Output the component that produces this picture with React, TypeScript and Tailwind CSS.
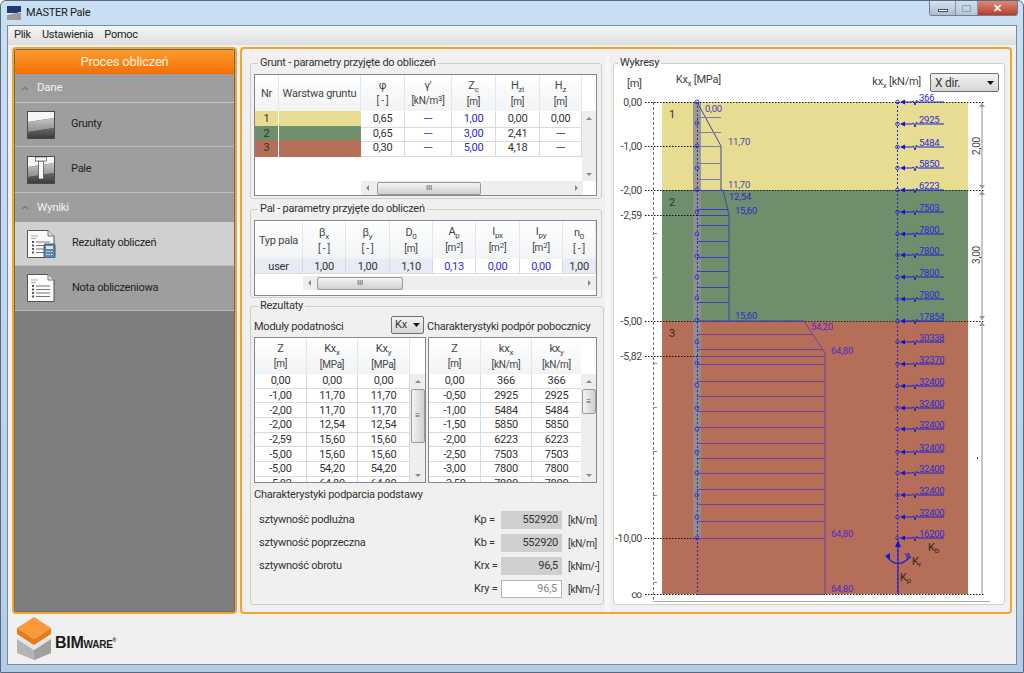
import React from 'react';

const font = { fontFamily: 'Roboto, "Liberation Sans", sans-serif' };

const soilRows = [
  { nr: '1', color: 'bg-[#e6dc92]', phi: '0,65', zc: '1,00', hzi: '0,00', hz: '0,00' },
  { nr: '2', color: 'bg-[#6f8e6b]', phi: '0,65', zc: '3,00', hzi: '2,41', hz: '---' },
  { nr: '3', color: 'bg-[#b56f58]', phi: '0,30', zc: '5,00', hzi: '4,18', hz: '---' }
];
const modRows = [
  ['0,00', '0,00', '0,00'], ['-1,00', '11,70', '11,70'], ['-2,00', '11,70', '11,70'], ['-2,00', '12,54', '12,54'],
  ['-2,59', '15,60', '15,60'], ['-5,00', '15,60', '15,60'], ['-5,00', '54,20', '54,20'], ['-5,82', '64,80', '64,80']
];
const supRows = [
  ['0,00', '366', '366'], ['-0,50', '2925', '2925'], ['-1,00', '5484', '5484'], ['-1,50', '5850', '5850'],
  ['-2,00', '6223', '6223'], ['-2,50', '7503', '7503'], ['-3,00', '7800', '7800'], ['-3,50', '7800', '7800']
];
const springs = [
  [102, '366'], [124, '2925'], [147, '5484'], [168, '5850'], [190, '6223'], [212, '7503'], [234, '7800'],
  [255, '7800'], [277, '7800'], [299, '7800'], [321, '17854'], [342, '30338'], [364, '32370'], [386, '32400'],
  [408, '32400'], [429, '32400'], [452, '32400'], [473, '32400'], [495, '32400'], [517, '32400'], [538, '16200']
] as [number, string][];
const pileNodes = [102, 123, 146, 168, 190, 212, 234, 256, 277, 298, 320, 342, 363, 385, 408, 429, 452, 473, 495, 517, 538];
const levels = [
  [102, '0,00'], [146, '-1,00'], [190, '-2,00'], [215, '-2,59'], [321, '-5,00'], [356, '-5,82'], [538, '-10,00'], [594, '∞']
] as [number, string][];
const hatchA = [117, 132, 146, 163, 179];
const hatchB = [190, 209, 215, 225, 241, 257, 271, 287, 302];
const hatchC = [334, 349];
const hatchD = [356, 364, 381, 396, 411, 427, 443, 458, 473, 489, 504, 521, 538, 594];
const axisTicks = [233, 277, 363, 407, 451, 495, 582];

const Group = ({ title, className, children }: { title: string; className: string; children: React.ReactNode }) => (
  <fieldset className={`border border-[#d0d0bf] rounded-[3px] ${className}`}>
    <legend className="ml-[4px] px-[2px] h-[14px] leading-[14px] text-[11px] text-[#333]">{title}</legend>
    {children}
  </fieldset>
);

const Head = ({ top, sub, unit, sup }: { top: string; sub?: string; unit?: string; sup?: string }) => (
  <div className="h-full flex flex-col items-center justify-center border-r border-[#e4e7ea] bg-gradient-to-b from-white to-[#f1f3f5] text-[#444] leading-[15px]">
    <div className="text-[11px]">
      {top}
      {sub && <span className="text-[8px] relative top-[3px]">{sub}</span>}
    </div>
    {unit && (
      <div className="text-[10px]">
        {unit}
        {sup && <span className="text-[8px] relative top-[-3px]">{sup}</span>}
        {sup && ']'}
      </div>
    )}
  </div>
);

const Val = ({ children, blue, className = '' }: { children?: React.ReactNode; blue?: boolean; className?: string }) => (
  <div className={`flex items-center justify-center border-r border-b border-[#d8dadc] text-[11px] leading-none ${blue ? 'text-[#2a2ad8]' : 'text-[#333]'} ${className}`}>
    {children}
  </div>
);

const Tri = ({ dir }: { dir: 'l' | 'r' | 'u' | 'd' }) => {
  const pts = { l: '5,1 5,7 2,4', r: '3,1 3,7 6,4', u: '1,5 7,5 4,2', d: '1,3 7,3 4,6' }[dir];
  return (
    <svg width="8" height="8" viewBox="0 0 8 8" className="shrink-0">
      <polygon points={pts} fill="#8a8a8a" />
    </svg>
  );
};

const HScroll = ({ offset, thumb, className }: { offset: string; thumb: string; className: string }) => (
  <div className={`flex items-center bg-[#eeeeee] h-[14px] ${className}`}>
    <div className="w-[14px] flex justify-center"><Tri dir="l" /></div>
    <div className={`${offset}`} />
    <div className={`${thumb} h-[13px] rounded-[2px] border border-[#9a9a9a] bg-gradient-to-b from-[#f4f4f4] to-[#cfcfcf] flex items-center justify-center text-[8px] leading-none text-[#555]`}>
      III
    </div>
    <div className="flex-1" />
    <div className="w-[14px] flex justify-center"><Tri dir="r" /></div>
  </div>
);

const VScroll = ({ thumb, className }: { thumb?: string; className: string }) => (
  <div className={`w-[15px] flex flex-col items-center bg-[#eeeeee] ${className}`}>
    <div className="h-[15px] flex items-center"><Tri dir="u" /></div>
    {thumb && (
      <div className={`${thumb} w-[14px] rounded-[2px] border border-[#9a9a9a] bg-gradient-to-r from-[#f4f4f4] to-[#cfcfcf] flex items-center justify-center text-[8px] leading-none text-[#555]`}>
        ≡
      </div>
    )}
    <div className="flex-1" />
    <div className="h-[15px] flex items-center"><Tri dir="d" /></div>
  </div>
);

const Combo = ({ label, className }: { label: string; className: string }) => (
  <div className={`flex items-center justify-between border border-[#707070] rounded-[2px] bg-gradient-to-b from-[#f2f2f2] to-[#d6d6d6] text-[#333] ${className}`}>
    <span>{label}</span>
    <svg width="7" height="4" viewBox="0 0 7 4"><polygon points="0,0 7,0 3.5,4" fill="#111" /></svg>
  </div>
);

const GruntTable = () => (
  <div className="h-[122px] border border-[#828790] bg-white flex flex-col">
    <div className="flex-1 flex">
      <div className="w-[327px]">
        <div className="grid grid-cols-[24px_82px_44px_47px_44px_44px_42px] h-[36px]">
          <Head top="Nr" />
          <Head top="Warstwa gruntu" />
          <Head top="φ" unit="[ - ]" />
          <Head top="γ'" unit="[kN/m" sup="3" />
          <Head top="Z" sub="c" unit="[m]" />
          <Head top="H" sub="zi" unit="[m]" />
          <Head top="H" sub="z" unit="[m]" />
        </div>
        {soilRows.map(r => (
          <div key={r.nr} className="grid grid-cols-[24px_82px_44px_47px_44px_44px_42px] h-[14.5px]">
            <div className={`${r.color} flex items-center justify-center text-[11px] text-[#333] border-r border-white`}>{r.nr}</div>
            <div className={r.color} />
            <Val>{r.phi}</Val>
            <Val blue>---</Val>
            <Val blue>{r.zc}</Val>
            <Val>{r.hzi}</Val>
            <Val>{r.hz}</Val>
          </div>
        ))}
      </div>
      <div className="flex-1 flex flex-col items-end">
        <div className="h-[36px]" />
        <VScroll className="flex-1 w-full" />
      </div>
    </div>
    <div className="flex h-[14px]">
      <div className="w-[106px]" />
      <HScroll offset="w-[2px]" thumb="w-[104px]" className="w-[222px]" />
    </div>
  </div>
);

const PalTable = () => (
  <div className="h-[76px] border border-[#828790] bg-white flex flex-col overflow-hidden">
    <div className="grid grid-cols-[48px_43px_44px_43px_43px_44px_43px_33px] h-[38px]">
      <Head top="Typ pala" />
      <Head top="β" sub="x" unit="[ - ]" />
      <Head top="β" sub="y" unit="[ - ]" />
      <Head top="D" sub="0" unit="[m]" />
      <Head top="A" sub="p" unit="[m" sup="2" />
      <Head top="I" sub="px" unit="[m" sup="2" />
      <Head top="I" sub="py" unit="[m" sup="2" />
      <Head top="n" sub="0" unit="[ - ]" />
    </div>
    <div className="grid grid-cols-[48px_43px_44px_43px_43px_44px_43px_33px] h-[15px]">
      <Val className="bg-[#e6ebf5]">user</Val>
      <Val className="bg-[#e6ebf5]">1,00</Val>
      <Val className="bg-[#e6ebf5]">1,00</Val>
      <Val className="bg-[#e6ebf5]">1,10</Val>
      <Val blue>0,13</Val>
      <Val blue>0,00</Val>
      <Val blue>0,00</Val>
      <Val className="bg-[#e6ebf5]">1,00</Val>
    </div>
    <div className="flex mt-[2px]">
      <div className="w-[48px]" />
      <HScroll offset="w-0" thumb="w-[86px]" className="flex-1" />
    </div>
  </div>
);

const ResultTable = ({ head, rows, thumb, gridClass, width }: {
  head: [string, string, string][];
  rows: string[][];
  thumb: string;
  gridClass: string;
  width: string;
}) => (
  <div className={`${width} h-[146px] border border-[#828790] bg-white flex overflow-hidden`}>
    <div className="flex-1 overflow-hidden">
      <div className={`grid ${gridClass} h-[36px]`}>
        {head.map(h => <Head key={h[0] + h[1]} top={h[0]} sub={h[1]} unit={h[2]} />)}
      </div>
      {rows.map((r, i) => (
        <div key={i} className={`grid ${gridClass} h-[14.67px]`}>
          {r.map((c, j) => <Val key={j}>{c}</Val>)}
        </div>
      ))}
    </div>
    <div className="w-[15px] flex flex-col">
      <div className="h-[36px] shrink-0" />
      <VScroll thumb={thumb} className="flex-1" />
    </div>
  </div>
);

const Stiffness = ({ label, name, value, unit, muted }: { label?: string; name: string; value: string; unit: string; muted?: boolean }) => (
  <div className="flex items-center h-[18px] text-[11px] text-[#333]">
    <div className="w-[220px] pl-[5px]">{label}</div>
    <div className="w-[27px] whitespace-nowrap">{name}</div>
    <div className={`w-[61px] h-[18px] pr-[4px] flex items-center justify-end ${muted ? 'border border-[#b5b5b5] bg-white text-[#888]' : 'bg-[#cfcfcf]'}`}>{value}</div>
    <div className="pl-[6px] text-[10px] whitespace-nowrap">{unit}</div>
  </div>
);

const Chart = () => (
  <svg width="390" height="510" viewBox="613 95 390 510" className="block overflow-visible">
    <rect x="661" y="102" width="306" height="88" fill="#e6dc92" />
    <rect x="661" y="190" width="306" height="131" fill="#6f8e6b" />
    <rect x="661" y="321" width="306" height="273" fill="#b56f58" />
    <rect x="692" y="102" width="8" height="436" fill="#8f8f8f" opacity="0.85" />
    <text x="671" y="118" fontSize="11" fill="#333" textAnchor="middle">1</text>
    <text x="671" y="206" fontSize="11" fill="#333" textAnchor="middle">2</text>
    <text x="671" y="337" fontSize="11" fill="#3a2018" textAnchor="middle">3</text>

    {levels.map(([y, t]) => (
      <g key={t}>
        <text x="641" y={y + 4} fontSize="10.5" fill="#444" textAnchor="end">{t}</text>
        <line x1="644" y1={y + 0.5} x2="696" y2={y + 0.5} stroke="#111" strokeDasharray="1.5 1.5" />
      </g>
    ))}
    {[102, 190, 321, 594].map(y => (
      <line key={y} x1="696" y1={y + 0.5} x2="984" y2={y + 0.5} stroke="#222" strokeDasharray="1.5 1.5" />
    ))}
    <line x1="652.5" y1="102" x2="652.5" y2="601" stroke="#777" strokeDasharray="3 2" />
    {axisTicks.map(y => <line key={y} x1="652" y1={y + 0.5} x2="656" y2={y + 0.5} stroke="#888" />)}
    <line x1="652" y1="601.5" x2="989" y2="601.5" stroke="#aaa" />

    <g stroke="#3a3ac8" fill="none" strokeWidth="1">
      <path d="M696 102 L720 146 L720 190 L722 190 L728 215 L728 321" stroke="#4a3fa8" />
      {hatchA.map(y => <line key={y} x1="696" y1={y + 0.5} x2="720" y2={y + 0.5} stroke="#7a7ab8" />)}
      {hatchB.map(y => <line key={y} x1="696" y1={y + 0.5} x2="728" y2={y + 0.5} />)}
      <line x1="696" y1="321" x2="803" y2="321" />
      <path d="M803 321 L824 353 L824 594" stroke="#6f3fa8" />
      {hatchC.map(y => <line key={y} x1="696" y1={y + 0.5} x2={y === 334 ? 811 : 821} y2={y + 0.5} stroke="#6f3fa8" />)}
      {hatchD.map(y => <line key={y} x1="696" y1={y + 0.5} x2="824" y2={y + 0.5} stroke="#6f3fa8" />)}
      <line x1="696.5" y1="102" x2="696.5" y2="594" strokeDasharray="2 2" stroke="#2a2ad0" />
      {pileNodes.map(y => <circle key={y} cx="696" cy={y} r="2" stroke="#3c3cd0" />)}
    </g>
    <g fontSize="9.5" fill="#2a2ad8">
      <text x="704" y="112" fill="#3f3fc0">0,00</text>
      <text x="727" y="145" fill="#4a3fb0">11,70</text>
      <text x="727" y="188" fill="#4a3fb0">11,70</text>
      <text x="728" y="200">12,54</text>
      <text x="734" y="214">15,60</text>
      <text x="734" y="319">15,60</text>
      <text x="810" y="330" fill="#6a20d0">54,20</text>
      <text x="830" y="354" fill="#5028d0">64,80</text>
      <text x="830" y="537" fill="#5028d0">64,80</text>
      <text x="830" y="592" fill="#5028d0">64,80</text>
    </g>

    <line x1="896.5" y1="102" x2="896.5" y2="594" stroke="#2222d8" strokeDasharray="2 2" />
    {springs.map(([y, t], i) => (
      <g key={i}>
        <circle cx="896.5" cy={y} r="1.8" fill="none" stroke="#3333c8" />
        <polygon points={`899,${y} 904,${y - 2.5} 904,${y + 2.5}`} fill="#1414d8" />
        <path d={`M904 ${y} H911 L912.5 ${y - 1} L914 ${y + 3} L915.5 ${y - 2} L916.5 ${y} H943`} fill="none" stroke="#1f1fd0" />
        <text x="918" y={y - 1.5} fontSize="9.5" fill="#2a2ad8">{t}</text>
      </g>
    ))}

    <g stroke="#b4b4b4" strokeWidth="1.5">
      <line x1="981" y1="103" x2="981" y2="189" />
      <line x1="981" y1="191" x2="981" y2="320" />
      <line x1="981" y1="322" x2="981" y2="594" />
    </g>
    {[[102, 1], [190, -1], [190, 1], [321, -1], [321, 1]].map(([y, d], i) => (
      <polygon key={i} points={`981,${y + d} 978,${y + d * 5} 984,${y + d * 5}`} fill="#9c9c9c" />
    ))}
    <text transform="translate(979 146) rotate(-90)" fontSize="10" fill="#444" textAnchor="middle">2,00</text>
    <text transform="translate(979 255) rotate(-90)" fontSize="10" fill="#444" textAnchor="middle">3,00</text>
    <rect x="976" y="457" width="1" height="2" fill="#444" />

    <g stroke="#1f1fd0" fill="none">
      <line x1="897" y1="594" x2="897" y2="545" strokeWidth="1.2" />
      <path d="M886 557 Q897 570 909 557" strokeWidth="1.2" />
      <path d="M904 553 L907 559 L907 553 L910 558" />
    </g>
    <polygon points="897,540 894,547 900,547" fill="#1414d8" />
    <polygon points="884,556 889,553 889,559" fill="#1414d8" />
    <g fill="#3a2018" fontSize="11">
      <text x="927" y="551">K<tspan fontSize="8" dy="2">b</tspan></text>
      <text x="911" y="565">K<tspan fontSize="8" dy="2">r</tspan></text>
      <text x="899" y="581">K<tspan fontSize="8" dy="2">p</tspan></text>
    </g>
  </svg>
);

const NavRow = ({ label, icon, active, height }: { label: string; icon: React.ReactNode; active?: boolean; height: string }) => (
  <div className={`${height} flex items-center pl-[12px] gap-[16px] text-[11px] text-[#222] border-b border-[#bdbdbd] ${active ? 'bg-[#d0d0d0]' : ''}`}>
    {icon}
    <span>{label}</span>
  </div>
);

const NavHeader = ({ label, className }: { label: string; className: string }) => (
  <div className={`flex items-center pl-[6px] gap-[8px] text-[11.5px] text-[#f2f2f2] ${className}`}>
    <svg width="8" height="5" viewBox="0 0 8 5"><path d="M1 4 L4 1.5 L7 4" fill="none" stroke="#7a7a7a" strokeWidth="1.5" /></svg>
    <span>{label}</span>
  </div>
);

const SoilIcon = ({ pile }: { pile?: boolean }) => (
  <svg width="28" height="28" viewBox="0 0 28 28">
    <defs>
      <linearGradient id="soilMid" x1="0" y1="0" x2="0" y2="1">
        <stop offset="0" stopColor="#c4c4c4" />
        <stop offset="1" stopColor="#8c8c8c" />
      </linearGradient>
      <linearGradient id="soilLow" x1="0" y1="0" x2="0" y2="1">
        <stop offset="0" stopColor="#6a6a6e" />
        <stop offset="1" stopColor="#3c3c40" />
      </linearGradient>
    </defs>
    <rect width="28" height="28" fill="#4a4a4a" />
    <path d="M1 1 H27 V7 L1 11 Z" fill="#f6f6f6" />
    <path d="M1 11 L27 7 V17 L1 21 Z" fill="url(#soilMid)" />
    <path d="M1 21 L27 17 V27 H1 Z" fill="url(#soilLow)" />
    {pile && (
      <g fill="#f8f8f8" stroke="#333" strokeWidth="0.6">
        <rect x="11.5" y="5" width="5" height="18" />
        <rect x="8.5" y="1" width="11" height="4" />
      </g>
    )}
  </svg>
);

const DocIcon = ({ calc }: { calc?: boolean }) => (
  <svg width="29" height="28" viewBox="0 0 29 28">
    <path d="M0.5 0.5 H21 L27 6 V27.5 H0.5 Z" fill="#fbfbfb" stroke="#555" />
    <path d="M21 0.5 V6 H27" fill="#ddd" stroke="#777" />
    <path d="M4 6 H11 M4 8.5 H9" stroke="#aaa" />
    {[12, 15.5, 19, 22.5].map(y => <g key={y}><rect x="5" y={y - 1} width="2" height="2" fill="#555" /><path d={`M9 ${y} H23`} stroke="#777" /></g>)}
    {calc && (
      <g>
        <rect x="17" y="14" width="11" height="14" rx="1" fill="#5d86ab" stroke="#3d5a78" />
        <rect x="19" y="16" width="7" height="3" fill="#d8e6f2" />
        <path d="M19 21.5 H26 M19 24.5 H26" stroke="#e4edf5" strokeDasharray="1.5 1" />
      </g>
    )}
  </svg>
);

const App: React.FC = () => {
  return (
    <div style={font} className="w-[1024px] h-[673px] overflow-hidden tracking-[-0.25px] bg-gradient-to-b from-[#c9dff3] to-[#b3cde6] flex flex-col px-[6px] pb-[7px] border border-[#5a6a7a] rounded-t-[6px]">
      <div className="h-[24px] shrink-0 flex items-start relative">
        <svg width="14" height="14" viewBox="0 0 14 14" className="mt-[5px]">
          <rect width="14" height="7" fill="#1f3a7a" />
          <path d="M0 9 L14 6 V14 H0 Z" fill="#9c9c9c" />
          <path d="M0 7 H14 V6 L0 9 Z" fill="#e8eef5" />
        </svg>
        <span className="ml-[5px] mt-[5px] text-[11px] leading-[14px] text-[#1a1a1a]">MASTER Pale</span>
        <div className="absolute right-[-1px] top-0 flex h-[15px] border border-t-0 border-[#6d7f92] rounded-b-[3px] overflow-hidden">
          <div className="w-[26px] flex items-end justify-center pb-[3px] bg-gradient-to-b from-[#d6e3ef] to-[#a9bccd] border-r border-[#8296a8]">
            <div className="w-[10px] h-[3px] bg-white border border-[#44505c]" />
          </div>
          <div className="w-[22px] flex items-center justify-center bg-gradient-to-b from-[#d0dfec] to-[#b3c6d7] border-r border-[#8296a8]">
            <div className="w-[9px] h-[7px] border border-[#92a4b4]" />
          </div>
          <div className="w-[39px] flex items-center justify-center bg-gradient-to-b from-[#d98a7a] to-[#b83a26] text-white text-[11px] font-bold leading-none">✕</div>
        </div>
      </div>
      <div className="flex-1 bg-[#f0f0f0] border border-[#7d8b99] flex flex-col min-h-0">
        <div className="h-[19px] shrink-0 flex items-center pl-[6px] gap-[11px] text-[11px] text-[#222] bg-gradient-to-b from-[#f6f6f6] to-[#dedede]">
          <span>Plik</span>
          <span>Ustawienia</span>
          <span>Pomoc</span>
        </div>
        <div className="flex-1 min-h-0 flex pl-[4px] pt-[2px] gap-[3px]">
          <aside className="w-[225px] h-[567px] border-2 border-[#f0a72e] rounded-[4px] overflow-hidden">
            <div className="h-full border border-dotted border-[#5a5a4a] bg-[#7f7f7f] flex flex-col">
              <div className="h-[24px] flex items-center justify-center bg-gradient-to-b from-[#fb9a2c] to-[#f56f00] text-[13px] text-[#fff3dc]">Proces obliczeń</div>
              <div className="bg-[#9e9e9e]">
                <NavHeader label="Dane" className="h-[29px] border-b border-[#c8c8c8]" />
                <NavRow height="h-[44px]" label="Grunty" icon={<SoilIcon />} />
                <NavRow height="h-[46px]" label="Pale" icon={<SoilIcon pile />} />
                <NavHeader label="Wyniki" className="h-[29px]" />
                <NavRow height="h-[44px]" label="Rezultaty obliczeń" icon={<DocIcon calc />} active />
                <NavRow height="h-[45px]" label="Nota obliczeniowa" icon={<DocIcon />} />
              </div>
            </div>
          </aside>
          <main className="w-[772px] h-[567px] border-2 border-[#f0a72e] rounded-[4px] bg-[#f0f0f0] flex pl-[8px] pt-[7px]">
            <div className="w-[352px] flex flex-col">
              <Group title="Grunt - parametry przyjęte do obliczeń" className="h-[143px] pl-[3px] pr-[4px] pt-[4px]">
                <GruntTable />
              </Group>
              <Group title="Pal - parametry przyjęte do obliczeń" className="mt-[3px] h-[96px] pl-[3px] pr-[4px] pt-[4px]">
                <PalTable />
              </Group>
              <Group title="Rezultaty" className="mt-[1px] h-[306px] pl-[3px] pr-[4px]">
                <div className="h-[24px] flex items-center text-[11px] text-[#333]">
                  <span className="w-[137px] mt-[4px]">Moduły podatności</span>
                  <Combo label="Kx" className="w-[33px] h-[18px] px-[3px] text-[11px]" />
                  <span className="ml-[3px] mt-[4px] whitespace-nowrap">Charakterystyki podpór pobocznicy</span>
                </div>
                <div className="flex gap-[2px]">
                  <ResultTable
                    width="w-[172px]"
                    gridClass="grid-cols-[52px_51px_52px]"
                    thumb="h-[54px]"
                    rows={modRows}
                    head={[['Z', '', '[m]'], ['Kx', 'x', '[MPa]'], ['Kx', 'y', '[MPa]']]}
                  />
                  <ResultTable
                    width="w-[169px]"
                    gridClass="grid-cols-[52px_51px_50px]"
                    thumb="h-[25px]"
                    rows={supRows}
                    head={[['Z', '', '[m]'], ['kx', 'x', '[kN/m]'], ['kx', 'y', '[kN/m]']]}
                  />
                </div>
                <div className="mt-[5px] h-[14px] leading-[14px] text-[11px] text-[#333]">Charakterystyki podparcia podstawy</div>
                <div className="mt-[9px] flex flex-col gap-[5px]">
                  <Stiffness label="sztywność podłużna" name="Kp =" value="552920" unit="[kN/m]" />
                  <Stiffness label="sztywność poprzeczna" name="Kb =" value="552920" unit="[kN/m]" />
                  <Stiffness label="sztywność obrotu" name="Krx =" value="96,5" unit="[kNm/-]" />
                  <Stiffness name="Kry =" value="96,5" unit="[kNm/-]" muted />
                </div>
              </Group>
            </div>
            <div className="w-[11px] flex justify-center">
              <div className="w-[5px] h-full bg-[#f6f6f6]" />
            </div>
            <Group title="Wykresy" className="w-[390px] h-[549px] bg-white">
              <div className="h-[25px] flex items-center pr-[5px] text-[#444] text-[11px]">
                <span className="ml-[13px] mt-[3px]">[m]</span>
                <span className="ml-[34px] -mt-[4px]">Kx<span className="text-[8px] relative top-[3px]">x</span> [MPa]</span>
                <span className="ml-auto mr-[9px]">kx<span className="text-[8px] relative top-[3px]">x</span> [kN/m]</span>
                <Combo label="X dir." className="w-[69px] h-[19px] px-[4px] text-[12px]" />
              </div>
              <Chart />
            </Group>
          </main>
        </div>
        <div className="h-[51px] shrink-0 flex items-center pl-[9px]">
          <svg width="35" height="43" viewBox="0 0 35 43">
            <path d="M0 22 L17 33 L34 22 V36 L17 43 L0 36 Z" fill="#b4b4b4" />
            <path d="M17 33 L34 22 V36 L17 43 Z" fill="#a0a0a0" />
            <path d="M0 22 L17 12 L34 22 L17 33 Z" fill="#dfe6ea" />
            <path d="M0 11 L17 22 L34 11 V17 L17 28 L0 17 Z" fill="#e87b15" />
            <path d="M0 11 L17 0 L34 11 L17 22 Z" fill="#f79a3a" />
          </svg>
          <div className="ml-[3px] mt-[9px] flex items-baseline font-bold text-[#1c1c1c] leading-none" style={{ fontFamily: '"Liberation Sans", sans-serif' }}>
            <span className="text-[16px]">BIM</span>
            <span className="text-[10px]">WARE</span>
            <span className="text-[5px] relative top-[-6px]">®</span>
          </div>
        </div>
      </div>
    </div>
  );
};

export default App;
